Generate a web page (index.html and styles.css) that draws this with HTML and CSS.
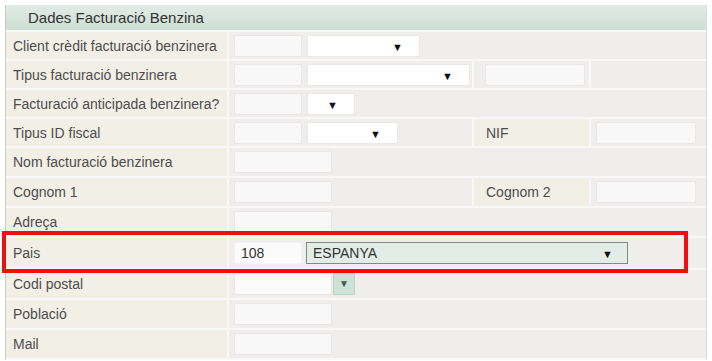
FILE: index.html
```html
<!DOCTYPE html>
<html lang="ca">
<head>
    <meta charset="UTF-8">
    <title>Dades Facturació Benzina</title>
    <link rel="stylesheet" href="styles.css">
</head>
<body>
    <div class="panel">
        <div class="panel-title">Dades Facturació Benzina</div>
        <table class="form">
            <colgroup>
                <col class="c-label">
                <col class="c-value">
                <col class="c-label2">
                <col class="c-value2">
            </colgroup>
            <tr class="row-short">
                <td class="lbl">Client crèdit facturació benzinera</td>
                <td class="val" colspan="3">
                    <span class="box code"></span><span class="sel w-113"><span class="arrow">▼</span></span>
                </td>
            </tr>
            <tr class="row-short">
                <td class="lbl">Tipus facturació benzinera</td>
                <td class="val">
                    <span class="box code"></span><span class="sel w-163"><span class="arrow">▼</span></span>
                </td>
                <td class="val mid"><span class="box w-100"></span></td>
                <td class="val"></td>
            </tr>
            <tr class="row-short">
                <td class="lbl">Facturació anticipada benzinera?</td>
                <td class="val" colspan="3">
                    <span class="box code"></span><span class="sel w-48"><span class="arrow">▼</span></span>
                </td>
            </tr>
            <tr class="row-short">
                <td class="lbl">Tipus ID fiscal</td>
                <td class="val">
                    <span class="box code"></span><span class="sel w-91"><span class="arrow">▼</span></span>
                </td>
                <td class="lbl lbl2">NIF</td>
                <td class="val"><span class="box w-100"></span></td>
            </tr>
            <tr>
                <td class="lbl">Nom facturació benzinera</td>
                <td class="val" colspan="3"><span class="box w-98"></span></td>
            </tr>
            <tr>
                <td class="lbl">Cognom 1</td>
                <td class="val"><span class="box w-98"></span></td>
                <td class="lbl lbl2">Cognom 2</td>
                <td class="val"><span class="box w-100"></span></td>
            </tr>
            <tr>
                <td class="lbl">Adreça</td>
                <td class="val" colspan="3"><span class="box w-98"></span></td>
            </tr>
            <tr class="row-pais">
                <td class="lbl">Pais</td>
                <td class="val" colspan="3">
                    <span class="box code plain">108</span><span class="sel sel-country">ESPANYA<span class="arrow">▼</span></span>
                </td>
            </tr>
            <tr>
                <td class="lbl">Codi postal</td>
                <td class="val" colspan="3">
                    <span class="combo"><span class="box w-98"></span><span class="combo-btn">▼</span></span>
                </td>
            </tr>
            <tr>
                <td class="lbl">Població</td>
                <td class="val" colspan="3"><span class="box w-98"></span></td>
            </tr>
            <tr>
                <td class="lbl">Mail</td>
                <td class="val" colspan="3"><span class="box w-98"></span></td>
            </tr>
        </table>
        <div class="mark"></div>
    </div>
</body>
</html>
```

FILE: styles.css
```css
/* formulari facturació */
body {
    margin: 0;
    padding: 5px 0 0 5px;
    background: #ffffff;
    font-family: "Liberation Sans", Arial, sans-serif;
    font-size: 14px;
    color: #4d4d4d;
}
.panel {
    position: relative;
    width: 700px;
    border-left: 1px solid #c9cbc8;
    border-right: 1px solid #dcdcdc;
}
.panel-title {
    height: 25px;
    line-height: 25px;
    padding-left: 22px;
    background: linear-gradient(#e2ebe6, #cddfd4);
    color: #333333;
    font-size: 15px;
}
.form {
    width: 100%;
    border-collapse: collapse;
    table-layout: fixed;
}
.c-label { width: 222px; }
.c-value { width: 245px; }
.c-label2 { width: 117px; }
.c-value2 { width: 116px; }
.form td {
    height: 28px;
    padding: 0;
    border: 2px solid #f9f8f8;
    border-left: none;
    border-right: none;
}
.form .row-short td {
    height: 27px;
}
.form .row-pais td {
    height: 30px;
}
.form td + td {
    border-left: 2px solid #f9f8f8;
}
.lbl {
    background: #f2efe6;
    padding-left: 7px !important;
    white-space: nowrap;
}
.lbl2 {
    padding-left: 12px !important;
}
.val {
    background: #f0eded;
    padding-left: 5px !important;
    white-space: nowrap;
    font-size: 0;
}
.val.mid {
    padding-left: 11px !important;
}
.box, .sel {
    display: inline-block;
    vertical-align: middle;
    height: 22px;
    box-sizing: border-box;
    font-size: 14px;
    line-height: 20px;
}
.box {
    background: #f8f8f8;
    border: 1px solid #e9e7e7;
    border-radius: 2px;
}
.box.code {
    width: 68px;
    margin-right: 5px;
}
.box.plain {
    background: #fbfbfb;
    border-color: #f4f4f4;
    padding-left: 6px;
    color: #333333;
}
.w-98 { width: 98px; }
.w-100 { width: 100px; }
.sel {
    position: relative;
    background: #ffffff;
    border: 1px solid #ebe8e8;
    border-radius: 2px;
}
.w-113 { width: 113px; }
.w-163 { width: 163px; }
.w-48 { width: 48px; }
.w-91 { width: 91px; }
.arrow {
    position: absolute;
    right: 16px;
    top: 1px;
    font-size: 11px;
    color: #111111;
}
.sel-country {
    width: 322px;
    margin-left: -1px;
    padding-left: 6px;
    background: #e3ede8;
    border: 1px solid #7f8b84;
    border-radius: 0;
    color: #333333;
}
.sel-country .arrow {
    right: 14px;
}
.combo {
    display: inline-flex;
    vertical-align: middle;
}
.combo .box {
    background: #fbfbfb;
}
.combo-btn {
    width: 22px;
    height: 22px;
    margin-left: 1px;
    background: #cde2d7;
    border: 1px solid #bcd3c6;
    box-sizing: border-box;
    color: #3d5f4e;
    font-size: 10px;
    line-height: 20px;
    text-align: center;
}
.mark {
    position: absolute;
    left: -4px;
    top: 226px;
    width: 686px;
    height: 42px;
    box-sizing: border-box;
    border: 4px solid #ee0f0f;
}
```
